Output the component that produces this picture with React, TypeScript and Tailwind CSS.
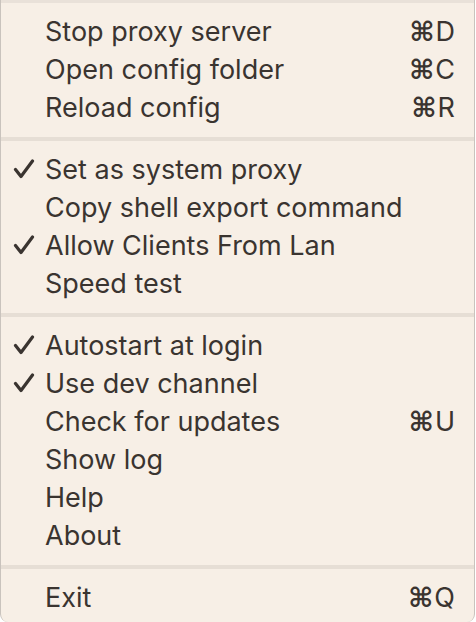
import React from "react";

type Item = { label: string; checked?: boolean; shortcut?: string } | "sep";

const items: Item[] = [
  { label: "Stop proxy server", shortcut: "D" },
  { label: "Open config folder", shortcut: "C" },
  { label: "Reload config", shortcut: "R" },
  "sep",
  { label: "Set as system proxy", checked: true },
  { label: "Copy shell export command" },
  { label: "Allow Clients From Lan", checked: true },
  { label: "Speed test" },
  "sep",
  { label: "Autostart at login", checked: true },
  { label: "Use dev channel", checked: true },
  { label: "Check for updates", shortcut: "U" },
  { label: "Show log" },
  { label: "Help" },
  { label: "About" },
  "sep",
  { label: "Exit", shortcut: "Q" },
];

const Check = () => (
  <svg width="22" height="20" viewBox="0 0 22 20" className="mt-[-2px]">
    <path d="M2.5 10.5 L8 17.5 L19.5 2" fill="none" stroke="#3a3430" strokeWidth="3.2" strokeLinecap="round" strokeLinejoin="round" />
  </svg>
);

const MenuRow = ({ label, checked, shortcut }: { label: string; checked?: boolean; shortcut?: string }) => (
  <div className="flex h-[38px] items-center">
    <div className="flex w-[44px] shrink-0 items-center pl-[12px]">
      {checked && <Check />}
    </div>
    <div className="flex-1 whitespace-nowrap">{label}</div>
    {shortcut && (
      <div className="flex items-center pr-[19px]">
        <span className="mr-[1px] text-[27px] font-bold font-['DejaVu_Sans',sans-serif]">⌘</span>
        <span>{shortcut}</span>
      </div>
    )}
  </div>
);

const App = () => (
  <div className="h-[622px] w-[476px] overflow-hidden bg-white">
    <div className="flex h-full w-[475px] flex-col overflow-hidden rounded-b-[8px] border-x border-[#c9c3bd] bg-[#f7efe6] text-[27px] text-[#3a3430] font-['Inter',sans-serif]">
      <div className="h-[3px] shrink-0 bg-[#e9e1d9]" />
      <div className="h-[10px] shrink-0" />
      {items.map((it, i) =>
        it === "sep" ? (
          <div key={i} className="flex h-[24px] shrink-0 items-center">
            <div className="h-[4px] w-full bg-[#e6ded5]" />
          </div>
        ) : (
          <MenuRow key={i} {...it} />
        )
      )}
    </div>
  </div>
);

export default App;
